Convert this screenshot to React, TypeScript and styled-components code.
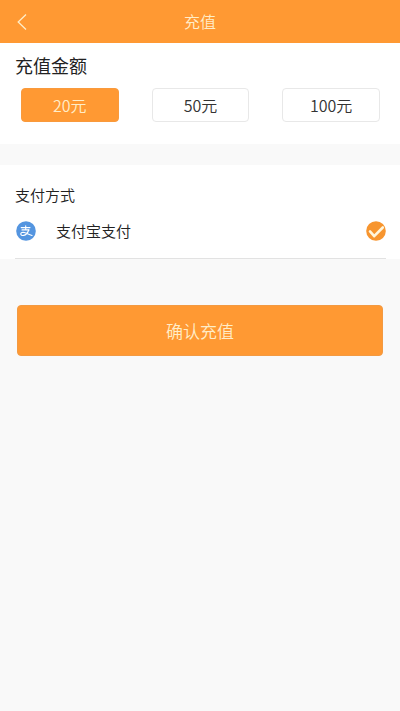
import React, { useState } from "react";
import styled, { createGlobalStyle } from "styled-components";

const GlobalStyle = createGlobalStyle`
  *, *::before, *::after { box-sizing: border-box; }
  body {
    margin: 0;
    background: #f9f9f9;
    color: #222;
    font-family: "Noto Sans CJK SC", "PingFang SC", sans-serif;
  }
  h1, h2, fieldset { margin: 0; padding: 0; border: 0; font-weight: 400; }
  fieldset { min-width: 0; }
  button { font-family: inherit; }
`;

const Header = styled.header`
  display: grid;
  grid-template-columns: 44px 1fr 44px;
  align-items: center;
  height: 43px;
  background: #ff9933;
  color: #ffedc8;
`;

const BackButton = styled.button`
  display: flex;
  align-items: center;
  height: 42px;
  padding: 0 0 0 16px;
  border: 0;
  background: none;
  color: inherit;
  cursor: pointer;
`;

const Title = styled.h1`
  padding-bottom: 1px;
  font-size: 16px;
  font-weight: 350;
  line-height: 24px;
  text-align: center;
`;

const AmountSection = styled.section`
  padding: 8px 20px 22px 21px;
  background: #fff;
`;

const AmountHeading = styled.h2`
  margin-left: -6px;
  font-size: 18px;
  line-height: 28px;
`;

const AmountGrid = styled.fieldset`
  display: grid;
  grid-template-columns: repeat(3, 1fr);
  gap: 33px;
  margin-top: 9px;
`;

const HiddenRadio = styled.input`
  position: absolute;
  inset: 0;
  width: 100%;
  height: 100%;
  margin: 0;
  opacity: 0;
  cursor: pointer;
`;

const AmountOption = styled.label<{ $selected: boolean }>`
  position: relative;
  display: flex;
  align-items: center;
  justify-content: center;
  height: 34px;
  border: 1px solid ${(p) => (p.$selected ? "#f99a3c" : "#e8e8e8")};
  border-radius: 4px;
  background: ${(p) => (p.$selected ? "#ff9933" : "#fff")};
  color: ${(p) => (p.$selected ? "#ffedc8" : "#333")};
  font-size: 16px;
  font-weight: 350;
  line-height: 24px;
`;

const PaymentSection = styled.section`
  margin-top: 21px;
  padding: 18px 14px 0 15px;
  background: #fff;
`;

const PaymentHeading = styled.h2`
  font-size: 15px;
  font-weight: 350;
  line-height: 24px;
`;

const PaymentRow = styled.label`
  position: relative;
  display: flex;
  align-items: center;
  height: 52px;
  padding: 0 0 3px 1px;
  border-bottom: 1px solid #e2e2e2;
`;

const PaymentName = styled.span`
  flex: 1;
  margin-left: 20px;
  font-size: 15px;
  font-weight: 350;
  line-height: 24px;
`;

const Icon = styled.svg`
  display: block;
  flex: none;
`;

const Actions = styled.div`
  padding: 46px 17px;
`;

const ConfirmButton = styled.button`
  display: block;
  width: 100%;
  height: 51px;
  padding: 0;
  border: 1px solid #f39a42;
  border-radius: 4px;
  background: #ff9933;
  color: #ffedc8;
  font-size: 17px;
  font-weight: 350;
  line-height: 24px;
  cursor: pointer;
`;

const amounts = [20, 50, 100];

function BackIcon() {
  return (
    <Icon width="12" height="18" viewBox="0 0 12 18" fill="none" aria-hidden="true">
      <path d="M10 1.5 2.2 9l7.8 7.5" stroke="currentColor" strokeWidth="1.3" />
    </Icon>
  );
}

function AlipayIcon() {
  return (
    <Icon width="20" height="20" viewBox="0 0 20 20" fill="none" aria-hidden="true">
      <circle cx="10" cy="10" r="9.8" fill="#5495e0" />
      <g stroke="#fff" strokeLinecap="round" strokeLinejoin="round">
        <path d="M5.2 6.6h8.8M9.7 4.8v4M6 8.9h7" strokeWidth="1.1" />
        <path
          d="M12.7 9c-.8 2.3-2.5 4.9-5 5.4-1.6.3-2.9-.3-2.9-1.500 0-1.300 1.700-1.900 3.500-1.400 2.500.7 4.500 2.200 7.700 3"
          strokeWidth="1.2"
        />
      </g>
    </Icon>
  );
}

function CheckIcon() {
  return (
    <Icon width="20" height="20" viewBox="0 0 20 20" fill="none" aria-hidden="true">
      <circle cx="10" cy="10" r="9.8" fill="#f7952f" />
      <path
        d="m4 10.4 4.200 4.800 8.600-8.700"
        stroke="#fff6dc"
        strokeWidth="2.6"
        strokeLinecap="round"
        strokeLinejoin="round"
      />
    </Icon>
  );
}

export default function App() {
  const [amount, setAmount] = useState(20);

  return (
    <>
      <GlobalStyle />
      <Header>
        <BackButton type="button" aria-label="返回">
          <BackIcon />
        </BackButton>
        <Title>充值</Title>
      </Header>
      <main>
        <AmountSection>
          <AmountHeading id="amount-heading">充值金额</AmountHeading>
          <AmountGrid aria-labelledby="amount-heading">
            {amounts.map((value) => (
              <AmountOption key={value} $selected={value === amount}>
                <HiddenRadio
                  type="radio"
                  name="amount"
                  value={value}
                  checked={value === amount}
                  onChange={() => setAmount(value)}
                />
                {value}元
              </AmountOption>
            ))}
          </AmountGrid>
        </AmountSection>
        <PaymentSection>
          <PaymentHeading>支付方式</PaymentHeading>
          <PaymentRow>
            <HiddenRadio type="radio" name="payment" value="alipay" defaultChecked />
            <AlipayIcon />
            <PaymentName>支付宝支付</PaymentName>
            <CheckIcon />
          </PaymentRow>
        </PaymentSection>
        <Actions>
          <ConfirmButton type="button">确认充值</ConfirmButton>
        </Actions>
      </main>
    </>
  );
}
